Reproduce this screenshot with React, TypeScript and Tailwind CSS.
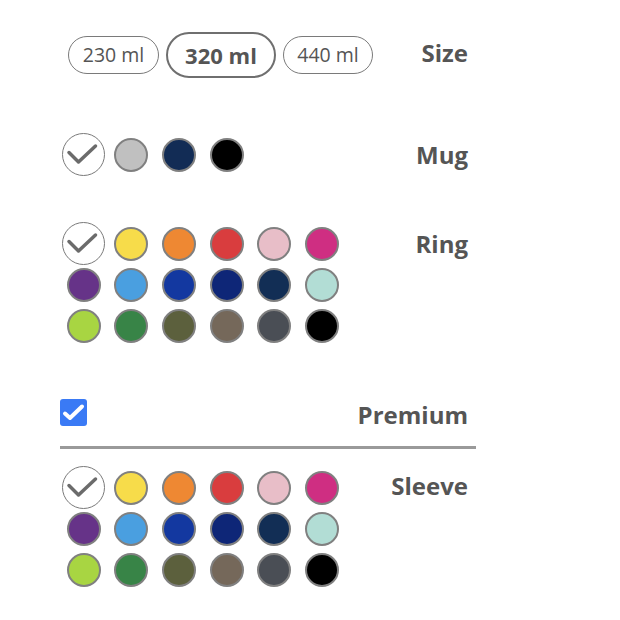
import React from "react";

const ring = [
  "#f7dc4a", "#ee8833", "#d93d3e", "#e8bec8", "#cf2e82",
  "#663388", "#4a9fe0", "#1338a0", "#0e2677", "#122e55", "#b2ddd5",
  "#a8d542", "#388447", "#5c603d", "#75685a", "#4a4e55", "#000000",
];

const mug = ["#c0c0c0", "#122c55", "#000000"];

function Selected() {
  return (
    <div className="w-[43px] h-[43px] rounded-full border-[1.5px] border-[#7a7a7a] bg-white">
      <svg width="40" height="40" viewBox="0 0 40 40" className="block">
        <path d="M6 18.5 L15.5 28 L32.5 12" fill="none" stroke="#6b6b6b" strokeWidth="3.5" strokeLinecap="round" strokeLinejoin="round" />
      </svg>
    </div>
  );
}

function Dot({ color }: { color: string }) {
  return (
    <div
      className="w-[34px] h-[34px] rounded-full border-2 border-[#808080]"
      style={{ background: color }}
    />
  );
}

function Swatches({ colors }: { colors: string[] }) {
  return (
    <div className="grid grid-cols-[repeat(6,47.6px)] auto-rows-[41px] items-center justify-items-center">
      <Selected />
      {colors.map((c, i) => (
        <Dot key={i} color={c} />
      ))}
    </div>
  );
}

function Label({ children, className = "" }: { children: React.ReactNode; className?: string }) {
  return (
    <div className={`h-[41px] flex items-center pr-[8px] text-[24px] font-bold text-[#555555] leading-none ${className}`}>
      {children}
    </div>
  );
}

export default function App() {
  return (
    <div
      className="w-[620px] h-[620px] bg-white pl-[60px] pt-[32px]"
      style={{ fontFamily: "'Open Sans', sans-serif" }}
    >
      <div className="w-[416px] flex flex-col">
        <div className="flex items-center justify-between h-[46px]">
          <div className="flex items-center gap-[7px] pl-[8px]">
            <div className="w-[91px] h-[38px] rounded-full border-[1.5px] border-[#7a7a7a] flex items-center justify-center text-[19.5px] text-[#555555]">
              230 ml
            </div>
            <div className="w-[110px] h-[46px] rounded-full border-2 border-[#6f6f6f] flex items-center justify-center text-[22px] font-bold text-[#555555]">
              320 ml
            </div>
            <div className="w-[90px] h-[38px] rounded-full border-[1.5px] border-[#7a7a7a] flex items-center justify-center text-[19.5px] text-[#555555]">
              440 ml
            </div>
          </div>
          <Label className="pb-[5px]">Size</Label>
        </div>

        <div className="flex justify-between mt-[56px]">
          <Swatches colors={mug} />
          <Label>Mug</Label>
        </div>

        <div className="flex justify-between mt-[48px]">
          <Swatches colors={ring} />
          <Label>Ring</Label>
        </div>

        <div className="flex items-center justify-between mt-[53px] h-[27px]">
          <div className="w-[27px] h-[27px] rounded-[3px] bg-[#3a7af5]">
            <svg width="27" height="27" viewBox="0 0 27 27" className="block">
              <path d="M5 14.5 L10 19 L22 7.5" fill="none" stroke="white" strokeWidth="4" strokeLinecap="round" strokeLinejoin="round" />
            </svg>
          </div>
          <Label className="pt-[5px]">Premium</Label>
        </div>

        <div className="mt-[20px] h-[3px] bg-[#9a9a9a]" />

        <div className="flex justify-between mt-[18px]">
          <Swatches colors={ring} />
          <Label className="pb-[3px]">Sleeve</Label>
        </div>
      </div>
    </div>
  );
}
